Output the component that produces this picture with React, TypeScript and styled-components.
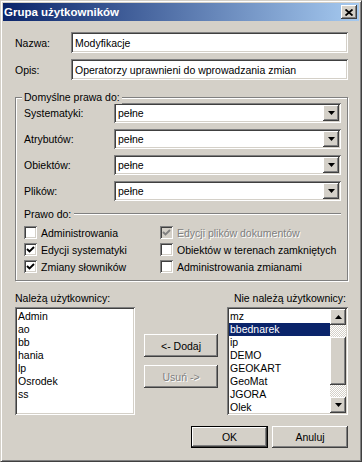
import React from "react";
import styled, { createGlobalStyle, css } from "styled-components";

const FACE = "#d4d0c8";

const GlobalStyle = createGlobalStyle`
  html, body { margin: 0; padding: 0; background: ${FACE}; }
  body { font-family: "Liberation Sans", Arial, sans-serif; font-size: 10.5px; color: #000; }
  * { box-sizing: border-box; }
`;

const Window = styled.div`
  width: 362px;
  height: 462px;
  background: ${FACE};
  border: 1px solid;
  border-color: ${FACE} #404040 #404040 ${FACE};
  box-shadow: inset 1px 1px #fff, inset -1px -1px #808080;
  padding: 2px;
  display: flex;
  flex-direction: column;
`;

const TitleBar = styled.div`
  height: 18px;
  flex: none;
  background: linear-gradient(to right, #0a246a, #a6caf0);
  display: flex;
  align-items: center;
  justify-content: space-between;
  padding: 0 2px 0 1px;
  color: #fff;
  font-weight: bold;
  font-size: 11.5px;
`;

const raised = css`
  background: ${FACE};
  box-shadow: inset -1px -1px #404040, inset 1px 1px #fff, inset -2px -2px #808080,
    inset 2px 2px ${FACE};
`;

const sunken = css`
  box-shadow: inset 1px 1px #808080, inset -1px -1px #fff, inset 2px 2px #404040,
    inset -2px -2px ${FACE};
`;

const CloseButton = styled.div`
  ${raised};
  width: 16px;
  height: 14px;
  display: flex;
  align-items: center;
  justify-content: center;
`;

const Body = styled.div`
  flex: 1;
  display: flex;
  flex-direction: column;
  padding: 11px 11px 0 12px;
`;

const FieldRow = styled.div<{ $gap?: number }>`
  display: grid;
  grid-template-columns: 56px 1fr;
  align-items: center;
  height: 21px;
  margin-top: ${(p) => p.$gap ?? 0}px;
`;

const Label = styled.span`
  white-space: nowrap;
`;

const TextBox = styled.div`
  ${sunken};
  background: #fff;
  height: 100%;
  display: flex;
  align-items: center;
  padding: 0 4px;
  white-space: nowrap;
`;

const GroupBox = styled.div`
  position: relative;
  margin-top: 17px;
  height: 184px;
  border: 1px solid #808080;
  box-shadow: inset 1px 1px #fff, 1px 1px #fff;
  padding: 5px 6px 0 8px;
  display: flex;
  flex-direction: column;
`;

const Legend = styled.span`
  position: absolute;
  top: -7px;
  left: 6px;
  background: ${FACE};
  padding: 0 2px;
  line-height: 13px;
`;

const SelectRow = styled.div<{ $gap?: number }>`
  display: grid;
  grid-template-columns: 90px 1fr;
  align-items: center;
  height: 20px;
  margin-top: ${(p) => p.$gap ?? 0}px;
`;

const SelectBox = styled.div`
  ${sunken};
  background: #fff;
  height: 100%;
  display: flex;
  align-items: center;
  padding: 2px 2px 2px 4px;
`;

const SelectText = styled.span`
  flex: 1;
`;

const ArrowButton = styled.div<{ $h?: number }>`
  ${raised};
  width: 16px;
  height: ${(p) => p.$h ?? 16}px;
  flex: none;
  display: flex;
  align-items: center;
  justify-content: center;
`;

const Separator = styled.div`
  display: flex;
  align-items: center;
  height: 13px;
  margin-top: 6px;
`;

const SepLine = styled.div`
  flex: 1;
  margin-left: 3px;
  height: 2px;
  border-top: 1px solid #808080;
  border-bottom: 1px solid #fff;
`;

const CheckGrid = styled.div`
  display: grid;
  grid-template-columns: 136px 1fr;
  grid-auto-rows: 17px;
  margin-top: 4px;
`;

const CheckItem = styled.div<{ $disabled?: boolean }>`
  display: flex;
  align-items: center;
  white-space: nowrap;
  color: ${(p) => (p.$disabled ? "#808080" : "#000")};
  text-shadow: ${(p) => (p.$disabled ? "1px 1px #fff" : "none")};
`;

const Box = styled.div<{ $disabled?: boolean }>`
  ${sunken};
  width: 13px;
  height: 13px;
  flex: none;
  background: ${(p) => (p.$disabled ? FACE : "#fff")};
  margin-right: 4px;
  display: flex;
  align-items: center;
  justify-content: center;
`;

const ListsGrid = styled.div`
  display: grid;
  grid-template-columns: 120px 92px 121px;
  grid-template-rows: 13px 108px;
  row-gap: 2px;
  margin-top: 11px;
`;

const ListLabel = styled.div<{ $right?: boolean }>`
  line-height: 13px;
  white-space: nowrap;
  text-align: ${(p) => (p.$right ? "right" : "left")};
  grid-column: ${(p) => (p.$right ? "2 / 4" : "1")};
  padding-right: ${(p) => (p.$right ? "2px" : "0")};
`;

const ListBox = styled.div`
  ${sunken};
  background: #fff;
  padding: 2px;
  display: flex;
  overflow: hidden;
`;

const Items = styled.div`
  flex: 1;
  padding-top: 1px;
  overflow: hidden;
`;

const Item = styled.div<{ $selected?: boolean }>`
  height: 13px;
  line-height: 13px;
  padding: 0 2px 0 1px;
  white-space: nowrap;
  background: ${(p) => (p.$selected ? "#0a246a" : "transparent")};
  color: ${(p) => (p.$selected ? "#fff" : "#000")};
`;

const ScrollBar = styled.div`
  width: 16px;
  flex: none;
  display: flex;
  flex-direction: column;
  background: repeating-conic-gradient(#fff 0 25%, ${FACE} 0 50%) 0 0 / 2px 2px;
`;

const Thumb = styled.div`
  ${raised};
  height: 48px;
  margin-top: 12px;
`;

const Track = styled.div`
  flex: 1;
`;

const MiddleButtons = styled.div`
  display: flex;
  flex-direction: column;
  align-items: center;
  gap: 8px;
  padding-top: 27px;
`;

const PushButton = styled.div<{ $w: number; $h: number; $disabled?: boolean; $default?: boolean }>`
  ${raised};
  width: ${(p) => p.$w}px;
  height: ${(p) => p.$h}px;
  display: flex;
  align-items: center;
  justify-content: center;
  white-space: nowrap;
  color: ${(p) => (p.$disabled ? "#808080" : "#000")};
  text-shadow: ${(p) => (p.$disabled ? "1px 1px #fff" : "none")};
  ${(p) =>
    p.$default &&
    css`
      border: 1px solid #000;
      box-shadow: inset -1px -1px #404040, inset 1px 1px #fff, inset -2px -2px #808080;
    `}
`;

const Footer = styled.div`
  display: flex;
  justify-content: flex-end;
  gap: 4px;
  margin-top: 11px;
`;

const DownArrow = () => (
  <svg width="7" height="4" viewBox="0 0 7 4">
    <polygon points="0,0 7,0 3.5,4" fill="#000" />
  </svg>
);

const UpArrow = () => (
  <svg width="7" height="4" viewBox="0 0 7 4">
    <polygon points="0,4 7,4 3.5,0" fill="#000" />
  </svg>
);

const Check = ({ color }: { color: string }) => (
  <svg width="9" height="9" viewBox="0 0 9 9">
    <polyline points="1,4 3.5,6.5 8,2" fill="none" stroke={color} strokeWidth="1.9" />
  </svg>
);

const CloseX = () => (
  <svg width="8" height="7" viewBox="0 0 8 7">
    <path d="M0.5 0.5 L7.5 6.5 M7.5 0.5 L0.5 6.5" stroke="#000" strokeWidth="1.8" />
  </svg>
);

const selects = ["Systematyki:", "Atrybutów:", "Obiektów:", "Plików:"];

const checks: { label: string; checked: boolean; disabled?: boolean }[] = [
  { label: "Administrowania", checked: false },
  { label: "Edycji plików dokumentów", checked: true, disabled: true },
  { label: "Edycji systematyki", checked: true },
  { label: "Obiektów w terenach zamkniętych", checked: false },
  { label: "Zmiany słowników", checked: true },
  { label: "Administrowania zmianami", checked: false },
];

const members = ["Admin", "ao", "bb", "hania", "lp", "Osrodek", "ss"];
const others = ["mz", "bbednarek", "ip", "DEMO", "GEOKART", "GeoMat", "JGORA", "Olek"];

export default function App() {
  return (
    <>
      <GlobalStyle />
      <Window>
        <TitleBar>
          <span>Grupa użytkowników</span>
          <CloseButton>
            <CloseX />
          </CloseButton>
        </TitleBar>
        <Body>
          <FieldRow>
            <Label>Nazwa:</Label>
            <TextBox>Modyfikacje</TextBox>
          </FieldRow>
          <FieldRow $gap={6}>
            <Label>Opis:</Label>
            <TextBox>Operatorzy uprawnieni do wprowadzania zmian</TextBox>
          </FieldRow>
          <GroupBox>
            <Legend>Domyślne prawa do:</Legend>
            {selects.map((s, i) => (
              <SelectRow key={s} $gap={i === 0 ? 0 : 6}>
                <Label>{s}</Label>
                <SelectBox>
                  <SelectText>pełne</SelectText>
                  <ArrowButton>
                    <DownArrow />
                  </ArrowButton>
                </SelectBox>
              </SelectRow>
            ))}
            <Separator>
              <span>Prawo do:</span>
              <SepLine />
            </Separator>
            <CheckGrid>
              {checks.map((c) => (
                <CheckItem key={c.label} $disabled={c.disabled}>
                  <Box $disabled={c.disabled}>
                    {c.checked && <Check color={c.disabled ? "#808080" : "#000"} />}
                  </Box>
                  {c.label}
                </CheckItem>
              ))}
            </CheckGrid>
          </GroupBox>
          <ListsGrid>
            <ListLabel>Należą użytkownicy:</ListLabel>
            <ListLabel $right>Nie należą użytkownicy:</ListLabel>
            <ListBox>
              <Items>
                {members.map((m) => (
                  <Item key={m}>{m}</Item>
                ))}
              </Items>
            </ListBox>
            <MiddleButtons>
              <PushButton $w={74} $h={23}>&lt;- Dodaj</PushButton>
              <PushButton $w={74} $h={23} $disabled>
                Usuń -&gt;
              </PushButton>
            </MiddleButtons>
            <ListBox>
              <Items>
                {others.map((m) => (
                  <Item key={m} $selected={m === "bbednarek"}>
                    {m}
                  </Item>
                ))}
              </Items>
              <ScrollBar>
                <ArrowButton>
                  <UpArrow />
                </ArrowButton>
                <Thumb />
                <Track />
                <ArrowButton>
                  <DownArrow />
                </ArrowButton>
              </ScrollBar>
            </ListBox>
          </ListsGrid>
          <Footer>
            <PushButton $w={77} $h={22} $default>
              OK
            </PushButton>
            <PushButton $w={76} $h={22}>
              Anuluj
            </PushButton>
          </Footer>
        </Body>
      </Window>
    </>
  );
}
